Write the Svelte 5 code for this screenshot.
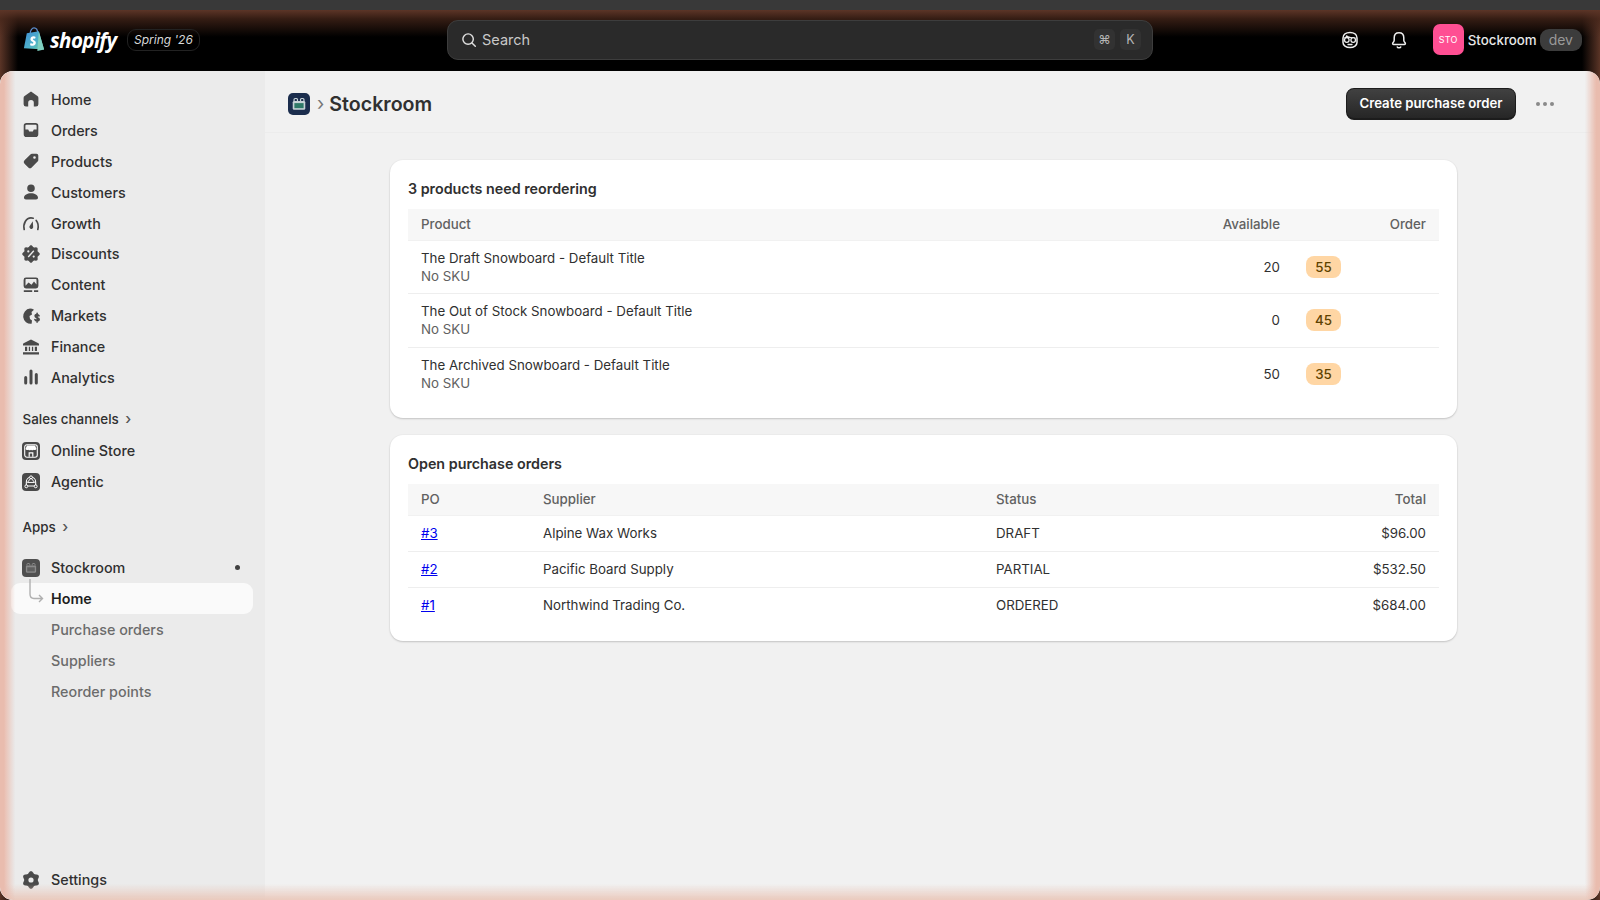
<script>
  // scalloped badge / gear outlines for the nav icons
  function burst(points, outer, inner) {
    const steps = 24 * points;
    let d = '';
    for (let i = 0; i < steps; i++) {
      const a = (i / steps) * Math.PI * 2;
      const r = inner + (outer - inner) * (0.5 + 0.5 * Math.cos(a * points));
      const x = (10 + r * Math.sin(a)).toFixed(2);
      const y = (10 - r * Math.cos(a)).toFixed(2);
      d += (i ? 'L' : 'M') + x + ' ' + y;
    }
    return d + 'z';
  }

  const icons = {
    home: { d: 'M10 2.4 3.6 7a2.4 2.4 0 0 0-1 2v6.2a2.4 2.4 0 0 0 2.4 2.4h2.2v-3.8a2.8 2.8 0 0 1 5.6 0v3.8H15a2.4 2.4 0 0 0 2.4-2.4V9a2.4 2.4 0 0 0-1-2z' },
    orders: { d: 'M5.5 3A2.8 2.8 0 0 0 2.7 5.8v8.4A2.8 2.8 0 0 0 5.5 17h9a2.8 2.8 0 0 0 2.8-2.8V5.8A2.8 2.8 0 0 0 14.500 3zM4.4 5.800a1.100 1.100 0 0 1 1.100-1.100h9a1.100 1.100 0 0 1 1.100 1.100V9.500h-2.800l-1 2h-3.600l-1-2H4.400z' },
    products: { d: 'M11.200 2.800h4.300a1.800 1.800 0 0 1 1.800 1.800v4.300a2.400 2.400 0 0 1-.7 1.700l-5.900 5.900a2.400 2.400 0 0 1-3.400 0l-3.800-3.800a2.400 2.400 0 0 1 0-3.400l5.900-5.900a2.400 2.400 0 0 1 1.800-.6zM13.500 5.200a1.300 1.300 0 1 0 0 2.600 1.300 1.300 0 0 0 0-2.600z' },
    customers: { d: 'M10 2.500a3.800 3.800 0 1 1 0 7.600 3.800 3.800 0 0 1 0-7.600zM10 11.200c3.800 0 6.700 1.700 7 4.300.1 1.100-.8 2-1.900 2H4.900c-1.100 0-2-.9-1.900-2 .3-2.600 3.200-4.300 7-4.300z' },
    growth: { d: 'M11.800 8.200 9 12.600a1.900 1.900 0 1 0 3.200 1.600z', s: 'M3.200 16.500C1.800 10.800 5.200 4.800 10 4.800c.8 0 1.500.1 2.200.4M15.200 7.500c1.900 2.400 2.400 6 1.600 9' },
    discounts: { d: burst(8, 8.800, 7.200) + 'M7.300 6.300a1.100 1.100 0 1 0 0 2.200 1.100 1.100 0 0 0 0-2.200zM12.700 11.500a1.100 1.100 0 1 0 0 2.200 1.100 1.100 0 0 0 0-2.200zM12.300 6.300l-5.600 6.200 1 1 5.600-6.200z' },
    content: { d: 'M5 2.600h10a2.400 2.400 0 0 1 2.400 2.400v6a2.400 2.400 0 0 1-2.400 2.400H5A2.400 2.400 0 0 1 2.600 11V5A2.400 2.400 0 0 1 5 2.600zM4.500 10.800l3-3.200 3 2.200 2.500-3.300 2.500 3v-5a.6.6 0 0 0-.6-.6H5.100a.6.6 0 0 0-.6.6zM2.800 15.300h8.400v1.600H2.800zM13 15.300h4.200v1.600H13z' },
    markets: { d: 'M9 2.600a7.400 7.400 0 0 1 4 1.200L10.500 6 11 8.500 8.500 10l.5 3 2 1.500-.4 3.300A7.500 7.500 0 0 1 9 2.600z', s: 'M18 9.800c-.4-.8-1-1.200-1.900-1.200-1.100 0-1.900.6-1.900 1.500 0 2.100 3.900 1 3.900 3.200 0 .9-.9 1.500-2 1.500-.9 0-1.700-.4-2.100-1.200M16.100 7.400v8.600' },
    finance: { d: 'M10 2.400 17.400 6.300c.5.3.6.7.6 1.200v.9H2v-.9c0-.5.1-.9.6-1.200zM4 9.700h2.200v4.400H4zM7.800 9.700H9.100v4.400H7.800zM10.900 9.700H12.200v4.400h-1.300zM13.800 9.700H16v4.400h-2.200zM2 15.300h16v2.200H2z' },
    analytics: { d: 'M3.200 10.500a1.500 1.500 0 0 1 3 0v5.600a1.500 1.500 0 0 1-3 0zM8.500 4a1.500 1.500 0 0 1 3 0v12.100a1.500 1.500 0 0 1-3 0zM13.800 7.500a1.500 1.500 0 0 1 3 0v8.600a1.500 1.500 0 0 1-3 0z' },
    settings: { d: burst(6, 8.800, 6.800) + 'M10 7.400a2.600 2.600 0 1 0 0 5.200 2.600 2.600 0 0 0 0-5.200z' }
  };

  const mainNav = [
    ['Home', 'home'], ['Orders', 'orders'], ['Products', 'products'], ['Customers', 'customers'],
    ['Growth', 'growth'], ['Discounts', 'discounts'], ['Content', 'content'], ['Markets', 'markets'],
    ['Finance', 'finance'], ['Analytics', 'analytics']
  ];

  const subNav = ['Purchase orders', 'Suppliers', 'Reorder points'];

  const reorder = [
    { title: 'The Draft Snowboard - Default Title', available: 20, order: 55 },
    { title: 'The Out of Stock Snowboard - Default Title', available: 0, order: 45 },
    { title: 'The Archived Snowboard - Default Title', available: 50, order: 35 }
  ];

  const purchaseOrders = [
    { po: '#3', supplier: 'Alpine Wax Works', status: 'DRAFT', total: '$96.00' },
    { po: '#2', supplier: 'Pacific Board Supply', status: 'PARTIAL', total: '$532.50' },
    { po: '#1', supplier: 'Northwind Trading Co.', status: 'ORDERED', total: '$684.00' }
  ];
</script>

{#snippet navIcon(name)}
  <svg class="nav-icon" viewBox="0 0 20 20">
    <path d={icons[name].d} fill="currentColor" fill-rule="evenodd" />
    {#if icons[name].s}
      <path d={icons[name].s} fill="none" stroke="currentColor" stroke-width="1.7" stroke-linecap="round" />
    {/if}
  </svg>
{/snippet}

{#snippet boxIcon(bg, fg, inner)}
  <svg viewBox="0 0 20 20" class="box-svg">
    <rect width="20" height="20" rx="4.5" fill={bg} />
    <path d="M5.500 7.200V6c0-.6.400-1 1-1h1.300c.5 0 .8.400.8 1v1.200M11.400 7.200V6c0-.6.300-1 .8-1h1.300c.6 0 1 .4 1 1v1.200" fill="none" stroke={fg} stroke-width="1.100" />
    <rect x="4.300" y="7.200" width="11.400" height="8" rx="1.200" fill={fg} />
    <rect x="5.800" y="9.200" width="8.400" height="4.600" fill={inner} />
  </svg>
{/snippet}

<div class="shell">
  <div class="strip"></div>

  <header class="topbar">
    <div class="brand">
      <svg class="bag" viewBox="0 0 22 26">
        <defs>
          <linearGradient id="bagfill" x1="0" y1="0" x2="1" y2="1">
            <stop offset="0" stop-color="#3f8fd6" />
            <stop offset="0.6" stop-color="#4fb3c8" />
            <stop offset="1" stop-color="#6fcf9f" />
          </linearGradient>
        </defs>
        <path d="M7 7C7 3.500 9 1 11 1s3.800 2 4 6" fill="none" stroke="#5d8fd0" stroke-width="1.300" />
        <path d="M3.500 6.500 16 4.500 21.500 23.500 0.500 22z" fill="url(#bagfill)" />
        <path d="M16 4.500 21.500 23.500 14.500 25z" fill="#7fd0c0" />
        <path d="M12.700 10.300c-.6-.4-1.300-.6-2.100-.6-2 0-3.300 1.400-3.300 3 0 2.300 3.100 2.400 3.100 3.700 0 .5-.4.900-1 .9-.9 0-1.900-.7-1.900-.7l-.6 2s1 .9 2.800.9c2 0 3.200-1.400 3.200-3.100 0-2.500-3.100-2.700-3.100-3.700 0-.4.300-.8 1-.8.700 0 1.300.3 1.300.3z" fill="#fff" />
      </svg>
      <span class="wordmark">shopify</span>
      <span class="edition">Spring '26</span>
    </div>

    <div class="search">
      <svg viewBox="0 0 20 20" class="search-icon">
        <circle cx="9" cy="9" r="5.800" fill="none" stroke="currentColor" stroke-width="1.600" />
        <path d="M13.300 13.300 17 17" fill="none" stroke="currentColor" stroke-width="1.600" stroke-linecap="round" />
      </svg>
      <span class="search-text">Search</span>
      <span class="kbd">⌘</span>
      <span class="kbd">K</span>
    </div>

    <div class="top-actions">
      <svg viewBox="0 0 20 20" class="top-icon dev-icon">
        <path d="M3 8c0-3.500 3-5.500 7-5.500S17 4.500 17 8v4.500c0 2.800-3 5-7 5s-7-2.200-7-5z" fill="none" stroke="currentColor" stroke-width="1.500" />
        <path d="M3 8c2-.5 3-1.500 3.500-3 2 1.800 6 2.500 10.500 3z" fill="currentColor" />
        <circle cx="6.800" cy="10" r="2.300" fill="none" stroke="currentColor" stroke-width="1.300" />
        <circle cx="13.200" cy="10" r="2.300" fill="none" stroke="currentColor" stroke-width="1.300" />
        <path d="M8 14.500h4" stroke="currentColor" stroke-width="1.300" stroke-linecap="round" />
      </svg>
      <svg viewBox="0 0 20 20" class="top-icon bell-icon">
        <path d="M10 2.800c-3 0-4.800 2.200-4.800 5v2.400c0 1-.5 1.700-1.300 2.600-.6.700-.2 1.700.8 1.700h10.600c1 0 1.400-1 .8-1.700-.8-.9-1.300-1.600-1.300-2.600V7.800c0-2.800-1.800-5-4.800-5z" fill="none" stroke="currentColor" stroke-width="1.500" />
        <path d="M8 16.400a2.100 2.100 0 0 0 4 0" fill="none" stroke="currentColor" stroke-width="1.500" />
      </svg>
      <span class="avatar">STO</span>
      <span class="store-name">Stockroom</span>
      <span class="dev-pill">dev</span>
    </div>
  </header>

  <div class="panel">
    <nav class="sidebar">
      <div class="nav-group">
        {#each mainNav as [label, icon]}
          <div class="nav-row">
            {@render navIcon(icon)}
            <span>{label}</span>
          </div>
        {/each}
      </div>

      <div class="nav-heading channels">Sales channels <span class="chev">›</span></div>

      <div class="nav-row">
        <svg class="nav-icon big" viewBox="0 0 20 20">
          <rect width="20" height="20" rx="4.500" fill="#4a4a4a" />
          <rect x="3" y="3" width="14" height="14" rx="2.500" fill="none" stroke="#fff" stroke-width="1.200" />
          <path d="M5.500 4h9l1.500 3.500a1.800 1.800 0 0 1-3 1 2.300 2.300 0 0 1-3 0 2.300 2.300 0 0 1-3 0 1.800 1.800 0 0 1-3-1z" fill="#fff" />
          <path d="M8 16.500v-4.500h4v4.500" fill="none" stroke="#fff" stroke-width="1.300" />
        </svg>
        <span>Online Store</span>
      </div>
      <div class="nav-row">
        <svg class="nav-icon big" viewBox="0 0 20 20">
          <rect width="20" height="20" rx="4.500" fill="#4a4a4a" />
          <path d="M4.800 14.500V10C4.800 7 7 4.800 10 4.800s5.200 2.200 5.200 5.200v4.500z" fill="none" stroke="#fff" stroke-width="1.200" />
          <path d="M10 5.500 6 10.500h8z" fill="none" stroke="#fff" stroke-width="1.100" />
          <circle cx="10" cy="4.800" r="1.600" fill="#4a4a4a" stroke="#fff" stroke-width="1.100" />
          <circle cx="4.800" cy="14.800" r="1.600" fill="#4a4a4a" stroke="#fff" stroke-width="1.100" />
          <circle cx="15.200" cy="14.800" r="1.600" fill="#4a4a4a" stroke="#fff" stroke-width="1.100" />
        </svg>
        <span>Agentic</span>
      </div>

      <div class="nav-heading apps">Apps <span class="chev">›</span></div>

      <div class="nav-row app-row">
        <span class="nav-icon big">{@render boxIcon('#4f4f4f', '#8a8a8a', '#5f5f5f')}</span>
        <span>Stockroom</span>
        <span class="dot"></span>
      </div>
      <div class="nav-row selected">
        <svg class="elbow" viewBox="0 0 20 26">
          <path d="M2 0v15c0 3 1.500 4.500 4 4.500h8M11 16l3.500 3.500L11 23" fill="none" stroke="#b0b0b0" stroke-width="1.400" />
        </svg>
        <span>Home</span>
      </div>
      {#each subNav as label}
        <div class="nav-row sub"><span>{label}</span></div>
      {/each}

      <div class="nav-row settings">
        {@render navIcon('settings')}
        <span>Settings</span>
      </div>
    </nav>

    <main class="content">
      <div class="page-head">
        <div class="crumbs">
          <span class="crumb-icon">{@render boxIcon('#1b2d4d', '#c6d2d6', '#2f7a68')}</span>
          <span class="crumb-chev">›</span>
          <h1>Stockroom</h1>
        </div>
        <div class="head-actions">
          <button class="primary">Create purchase order</button>
          <span class="dots"><i></i><i></i><i></i></span>
        </div>
      </div>

      <div class="cards">
        <section class="card">
          <h2>3 products need reordering</h2>
          <table>
            <thead>
              <tr><th>Product</th><th class="num avail">Available</th><th class="num order">Order</th></tr>
            </thead>
            <tbody>
              {#each reorder as item}
                <tr class="tall">
                  <td>{item.title}<div class="sku">No SKU</div></td>
                  <td class="num">{item.available}</td>
                  <td class="order-cell"><span class="qty">{item.order}</span></td>
                </tr>
              {/each}
            </tbody>
          </table>
        </section>

        <section class="card">
          <h2>Open purchase orders</h2>
          <table>
            <thead>
              <tr><th class="po">PO</th><th class="supplier">Supplier</th><th class="status">Status</th><th class="num">Total</th></tr>
            </thead>
            <tbody>
              {#each purchaseOrders as row}
                <tr class="short">
                  <td><a href="#{row.po.slice(1)}">{row.po}</a></td>
                  <td>{row.supplier}</td>
                  <td>{row.status}</td>
                  <td class="num">{row.total}</td>
                </tr>
              {/each}
            </tbody>
          </table>
        </section>
      </div>
    </main>

    <div class="glow"></div>
  </div>
</div>

<style>
  :global(body) {
    margin: 0;
    background: #000;
    font-family: Inter, "Liberation Sans", sans-serif;
  }

  .shell {
    height: 900px;
    width: 1600px;
    overflow: hidden;
    display: flex;
    flex-direction: column;
    background:
      linear-gradient(to right, #5a3426, rgba(90, 52, 38, 0) 18px),
      linear-gradient(to left, #5a3426, rgba(90, 52, 38, 0) 18px),
      #000;
  }

  .strip {
    height: 10px;
    flex: none;
    background: #393939;
  }

  .topbar {
    height: 61px;
    box-sizing: border-box;
    flex: none;
    display: flex;
    align-items: center;
    padding: 0 18px 2px 23px;
    color: #fff;
    background: linear-gradient(to bottom, #5c3527, rgba(70, 38, 26, 0.75) 9px, rgba(0, 0, 0, 0) 27px);
  }

  .brand {
    width: 424px;
    display: flex;
    align-items: center;
  }

  .bag {
    width: 22px;
    height: 25px;
    margin-right: 5px;
  }

  .wordmark {
    font-family: "Open Sans", sans-serif;
    font-weight: 700;
    font-style: italic;
    font-size: 20.500px;
    letter-spacing: -0.6px;
    width: 77px;
  }

  .edition {
    font-size: 12px;
    font-style: italic;
    color: #d8d8d8;
    border: 1px solid #222;
    border-radius: 9px;
    height: 20px;
    line-height: 20px;
    padding: 0 6px;
  }

  .search {
    width: 706px;
    height: 40px;
    box-sizing: border-box;
    display: flex;
    align-items: center;
    padding: 0 11px 0 12px;
    background: #2a2a2a;
    border: 1px solid #3d3d3d;
    border-radius: 11px;
    color: #c8c8c8;
    font-size: 14.500px;
  }

  .search-icon {
    width: 18px;
    height: 18px;
    margin-right: 4px;
    color: #e0e0e0;
  }

  .search-text {
    flex: 1;
  }

  .kbd {
    width: 21px;
    text-align: center;
    margin-left: 5px;
    font-size: 12.500px;
    color: #b5b5b5;
    background: #323232;
    border-radius: 5px;
    height: 21px;
    line-height: 21px;
  }

  .top-actions {
    flex: 1;
    display: flex;
    align-items: center;
    justify-content: flex-end;
  }

  .top-icon {
    width: 20px;
    height: 20px;
    color: #eee;
  }

  .bell-icon {
    margin: 0 24px 0 29px;
  }

  .avatar {
    width: 31px;
    height: 31px;
    border-radius: 7px;
    background: #ff4f93;
    color: #fff;
    font-size: 9px;
    letter-spacing: 0.3px;
    display: flex;
    align-items: center;
    justify-content: center;
  }

  .store-name {
    font-size: 13.300px;
    font-weight: 500;
    margin: 0 3px 0 4px;
    color: #e8e8e8;
  }

  .dev-pill {
    background: #3c3c3c;
    color: #999;
    font-size: 14px;
    border-radius: 9px;
    height: 22px;
    line-height: 22px;
    padding: 0 9px;
  }

  .panel {
    flex: 1;
    display: flex;
    position: relative;
    border-radius: 13px;
    overflow: hidden;
    background: #f1f1f1;
    min-height: 0;
  }

  .glow {
    position: absolute;
    inset: 0;
    pointer-events: none;
    border-radius: 13px;
    background:
      linear-gradient(to right, #e9bcae, #e9bcae 4px, rgba(233, 188, 174, 0) 15px),
      linear-gradient(to left, #e9bcae, #e9bcae 4px, rgba(233, 188, 174, 0) 15px),
      linear-gradient(to top, rgba(233, 195, 180, 0.85), rgba(233, 195, 180, 0) 16px);
  }

  .sidebar {
    width: 265px;
    flex: none;
    box-sizing: border-box;
    background: #ebebeb;
    padding-top: 13px;
    display: flex;
    flex-direction: column;
    color: #303030;
  }

  .nav-row {
    height: 30.900px;
    flex: none;
    display: flex;
    align-items: center;
    font-size: 14.350px;
    font-weight: 500;
    padding-left: 21px;
    position: relative;
  }

  .nav-icon {
    width: 20px;
    height: 20px;
    margin-right: 10px;
    color: #4a4a4a;
    flex: none;
  }

  .nav-icon.big {
    display: block;
    width: 18px;
    height: 18px;
    margin-left: 1px;
    margin-right: 11px;
  }

  .box-svg {
    display: block;
    width: 100%;
    height: 100%;
  }

  .nav-heading {
    font-size: 13.400px;
    font-weight: 500;
    padding-left: 22.500px;
    height: 22px;
    line-height: 22px;
    flex: none;
  }

  .channels {
    margin-top: 15.500px;
    margin-bottom: 5px;
  }

  .apps {
    margin-top: 19px;
    margin-bottom: 14px;
  }

  .chev {
    color: #555;
    margin-left: 3px;
    font-size: 15px;
  }

  .app-row .dot {
    width: 5px;
    height: 5px;
    border-radius: 50%;
    background: #404040;
    margin-left: auto;
    margin-right: 25px;
  }

  .selected {
    background: #fafafa;
    margin: 0 12px 0 11px;
    padding-left: 40px;
    border-radius: 9px;
    font-weight: 600;
    color: #1f1f1f;
  }

  .elbow {
    position: absolute;
    left: 17px;
    top: -4px;
    width: 20px;
    height: 26px;
  }

  .sub {
    padding-left: 51px;
    font-weight: 450;
    color: #6b6b6b;
  }

  .settings {
    margin-top: auto;
    margin-bottom: 5px;
  }

  .content {
    flex: 1;
    min-width: 0;
  }

  .page-head {
    height: 62px;
    box-sizing: border-box;
    display: flex;
    align-items: center;
    padding: 4px 46px 0 23px;
    border-bottom: 1px solid #ececec;
  }

  .crumbs {
    flex: 1;
    display: flex;
    align-items: center;
  }

  .crumb-icon {
    width: 22px;
    height: 22px;
    display: block;
  }

  .crumb-chev {
    color: #777;
    font-size: 19px;
    margin: 0 5px 0 7px;
    line-height: 1;
  }

  h1 {
    margin: 0;
    font-size: 19.600px;
    font-weight: 600;
    color: #303030;
  }

  .head-actions {
    display: flex;
    align-items: center;
  }

  .primary {
    width: 170px;
    height: 32px;
    font-family: inherit;
    font-size: 13.200px;
    font-weight: 600;
    color: #fff;
    background: linear-gradient(to bottom, #414141, #262626);
    border: 1px solid #1c1c1c;
    border-bottom-width: 2px;
    border-radius: 8px;
    padding: 0;
  }

  .dots {
    display: flex;
    gap: 3px;
    margin-left: 20px;
  }

  .dots i {
    width: 4px;
    height: 4px;
    border-radius: 50%;
    background: #8a8a8a;
  }

  .cards {
    width: 1067px;
    margin: 27px 0 0 125px;
    display: flex;
    flex-direction: column;
    gap: 17px;
  }

  .card {
    background: #fff;
    border-radius: 13px;
    padding: 18px 18px 18px;
    box-shadow: 0 1px 2px rgba(0, 0, 0, 0.18), 0 0 0 1px rgba(0, 0, 0, 0.015);
  }

  h2 {
    margin: 0 0 10.500px;
    height: 20px;
    line-height: 21px;
    font-size: 14.300px;
    font-weight: 600;
    color: #303030;
  }

  table {
    width: 100%;
    border-collapse: collapse;
    font-size: 13.300px;
    color: #303030;
  }

  th {
    height: 30px;
    background: #f7f7f7;
    text-align: left;
    font-weight: 500;
    color: #616161;
    padding: 0 13px 1px;
    border-bottom: 1px solid #f1f1f1;
  }

  td {
    padding: 0 13px;
    border-bottom: 1px solid #eeeeee;
  }

  tr:last-child td {
    border-bottom: none;
  }

  .tall td {
    height: 52.500px;
    line-height: 18px;
  }

  .short td {
    height: 35px;
  }

  .num {
    text-align: right;
  }

  .avail {
    width: 110px;
  }

  .order {
    width: 120px;
  }

  .po {
    width: 96px;
  }

  .supplier {
    width: 427px;
  }

  .sku {
    color: #616161;
  }

  .qty {
    display: inline-block;
    width: 35px;
    height: 22px;
    line-height: 22px;
    text-align: center;
    background: #ffd6a4;
    color: #5e4200;
    border-radius: 8px;
    font-weight: 500;
  }

  a {
    color: #0000ee;
  }
</style>
